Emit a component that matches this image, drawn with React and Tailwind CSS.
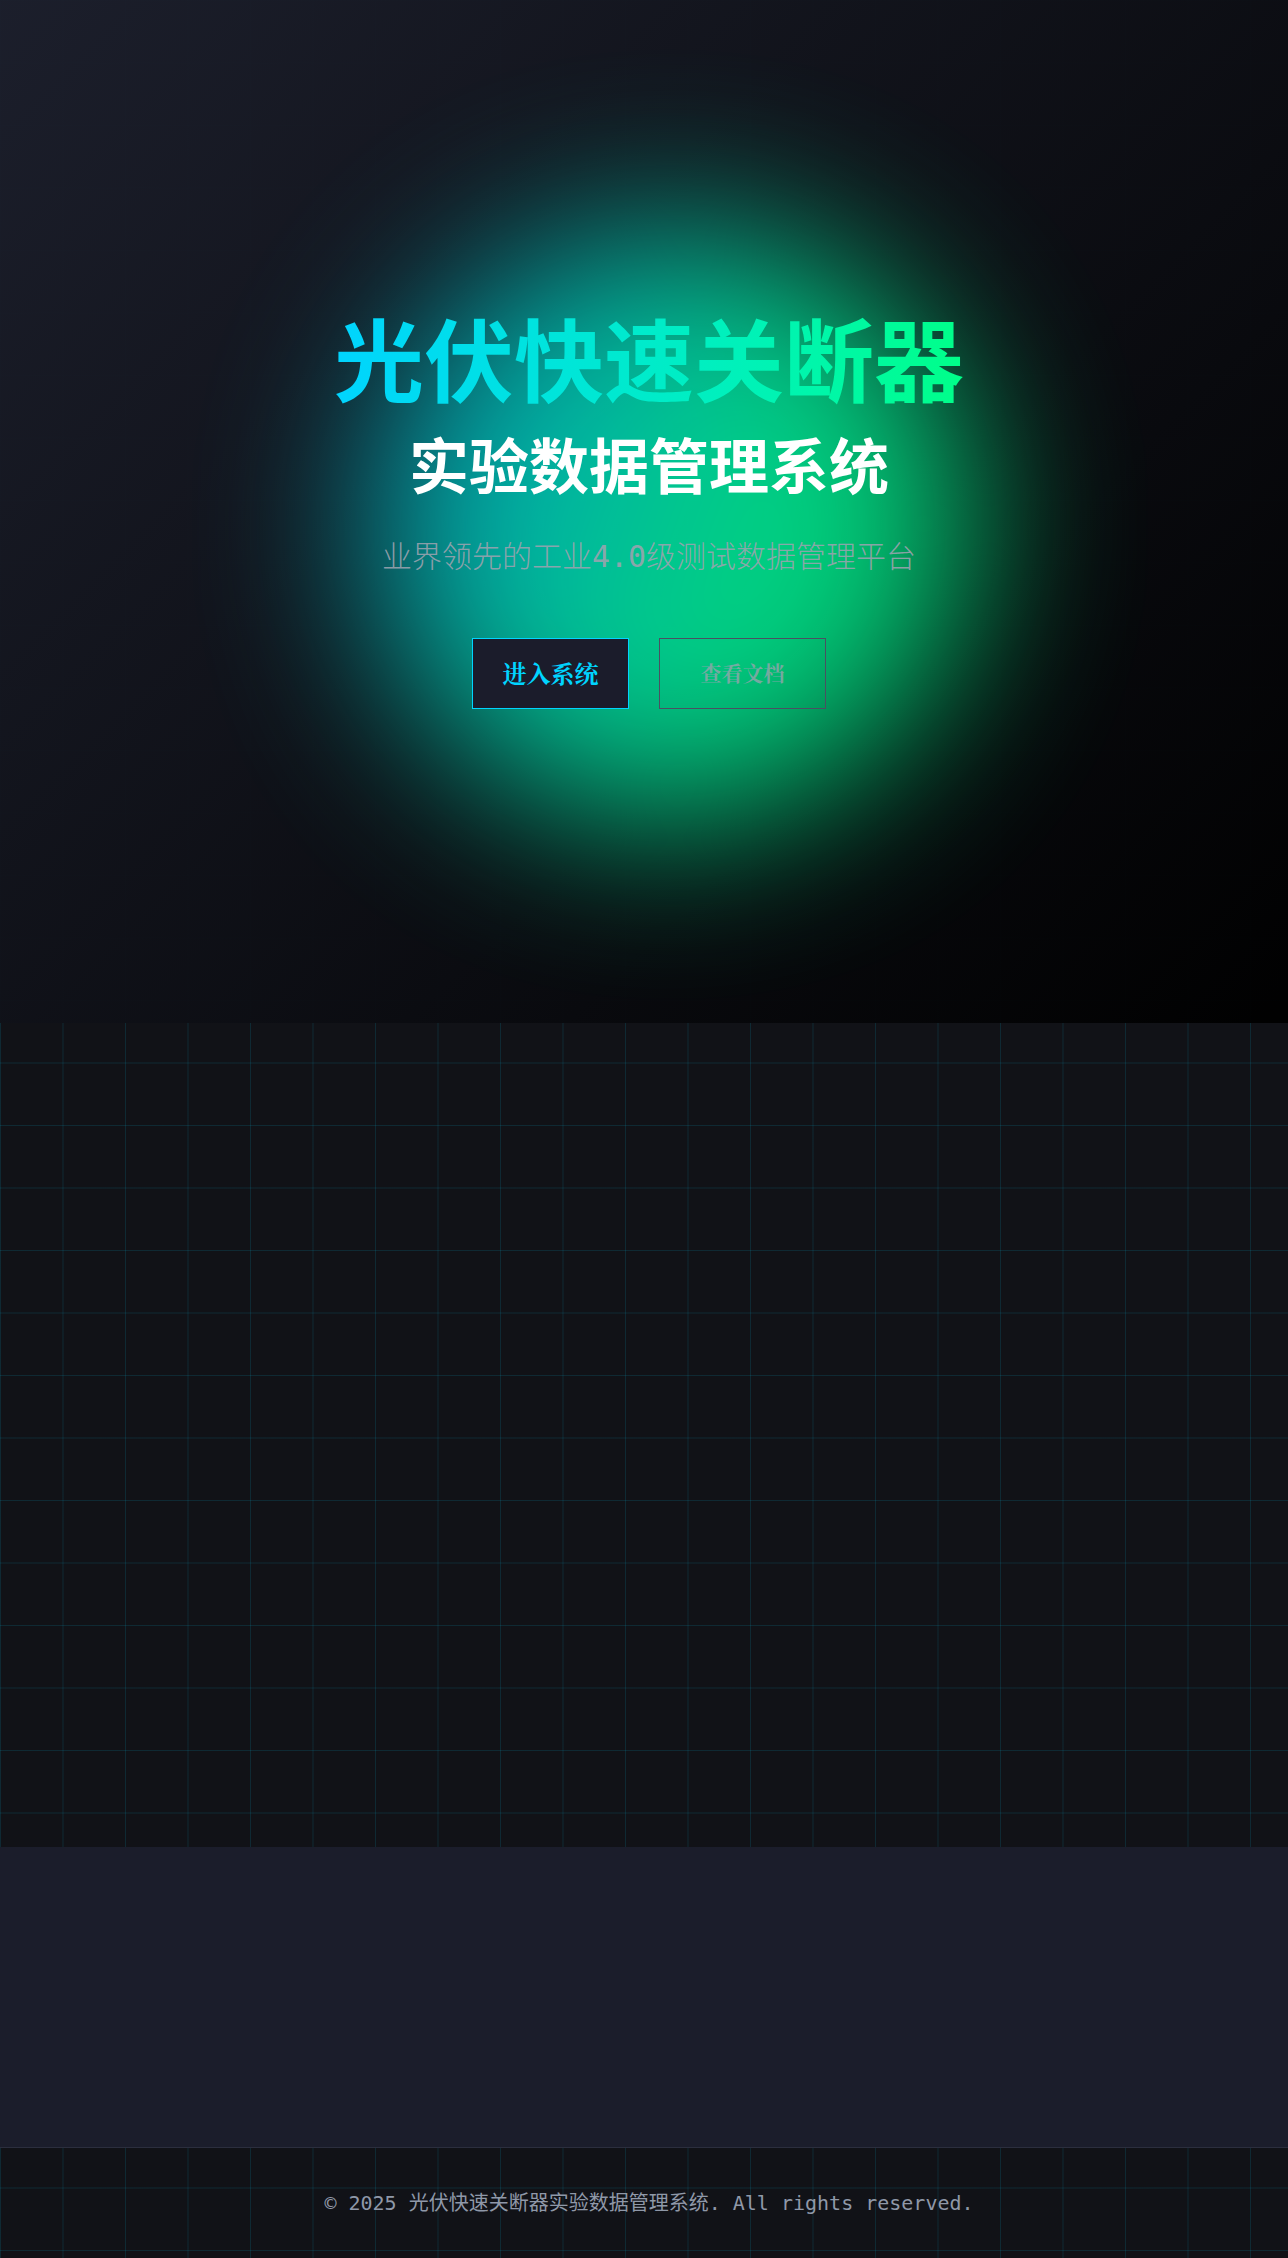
export default function App() {
  return (
    <div className="min-h-screen w-full bg-[#111217] bg-[linear-gradient(rgba(0,212,255,0.12)_1px,transparent_1px),linear-gradient(90deg,rgba(0,212,255,0.12)_1px,transparent_1px)] bg-[size:62.5px_62.5px] font-['Noto_Sans','Noto_Sans_CJK_SC',sans-serif]">
      {/* hero */}
      <section className="relative h-[1023px] overflow-hidden">
        <div className="absolute inset-0 bg-[linear-gradient(135deg,#1c1f2c_0%,#000000_100%)] opacity-[0.97]" />
        <div className="absolute left-[370px] top-[230px] h-[590px] w-[600px] rounded-full bg-[linear-gradient(110deg,#0096d0_0%,#00c8b0_35%,#00e890_60%,#00e070_100%)] opacity-90 blur-[85px]" />

        <div className="relative z-10 flex h-full flex-col items-center justify-center pl-[10px]">
          <h1 className="bg-gradient-to-r from-[#00d4ff] to-[#00ff88] bg-clip-text text-[90px] font-bold leading-none text-transparent">
            光伏快速关断器
          </h1>
          <h2 className="mt-[31px] text-[60px] font-bold leading-none text-white">实验数据管理系统</h2>
          <p className="mt-[40px] font-['DejaVu_Sans_Mono','Noto_Sans_CJK_SC',monospace] text-[30px] font-light leading-[42px] text-[#9ca3af]/90">
            业界领先的工业4.0级测试数据管理平台
          </p>

          <div className="mt-[60px] flex gap-[30px] font-['Noto_Serif_CJK_SC',serif]">
            <button className="h-[71px] w-[157px] border border-[#00d4ff] bg-[#1b1c2b] text-[24px] font-bold text-[#00d4ff]">
              进入系统
            </button>
            <button className="h-[71px] w-[167px] border border-[#4b5062] bg-transparent text-[21px] font-bold text-[#9ca3af]/75">
              查看文档
            </button>
          </div>
        </div>
      </section>

      {/* grid area */}
      <section className="h-[824px]" />

      {/* empty band */}
      <section className="h-[300px] bg-[#1b1d2b]" />

      <footer className="flex h-[111px] items-center justify-center border-t border-[#2b2e3e] pl-[10px]">
        <p className="font-['DejaVu_Sans_Mono','Noto_Sans_CJK_SC',monospace] text-[20px] text-[#8f98a8]">
          © 2025 光伏快速关断器实验数据管理系统. All rights reserved.
        </p>
      </footer>
    </div>
  );
}
